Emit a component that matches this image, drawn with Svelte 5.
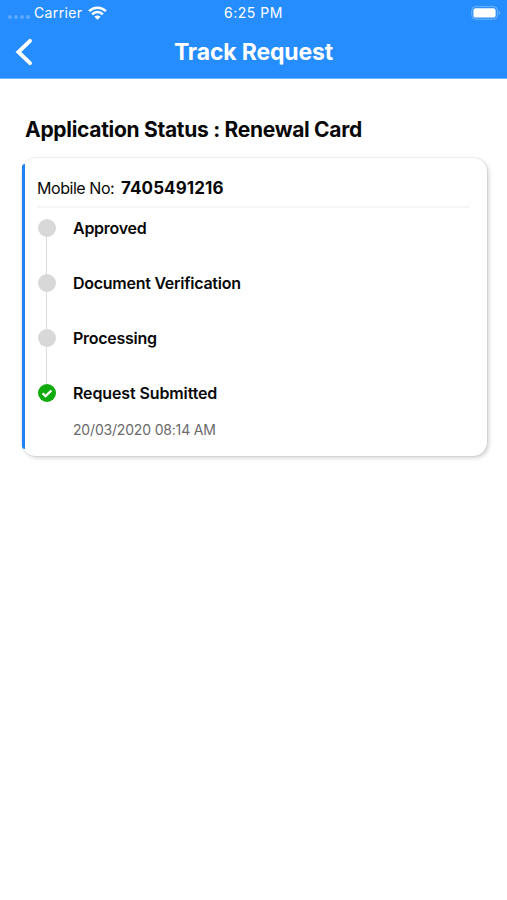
<script lang="ts">
    interface Step {
        label: string;
        done: boolean;
        date?: string;
    }

    const mobileNo = "7405491216";

    const steps: Step[] = [
        { label: "Approved", done: false },
        { label: "Document Verification", done: false },
        { label: "Processing", done: false },
        { label: "Request Submitted", done: true, date: "20/03/2020 08:14 AM" },
    ];
</script>

<div class="screen">
    <header class="header">
        <div class="status-bar">
            <div class="carrier">
                <span class="signal"><i></i><i></i><i></i><i></i></span>
                <span class="carrier-name">Carrier</span>
                <svg class="wifi" viewBox="0 0 19 14" width="19" height="14">
                    <path d="M1.1 5.1a12 12 0 0 1 16.8 0" />
                    <path d="M4.1 8.3a7.6 7.6 0 0 1 10.8 0" />
                    <path class="fill" d="M9.5 13.8L6.4 10.7a4.4 4.4 0 0 1 6.2 0z" />
                </svg>
            </div>
            <span class="clock">6:25 PM</span>
            <svg class="battery" viewBox="0 0 30 14" width="30" height="14">
                <rect class="shell" x="0.8" y="0.6" width="25.6" height="12.6" rx="3.8" />
                <rect x="2.4" y="2.2" width="22.2" height="9.4" rx="2.2" />
                <path class="tip" d="M27.8 4.8c1.6.6 1.6 3.6 0 4.2z" />
            </svg>
        </div>
        <div class="nav-bar">
            <button type="button" class="back" aria-label="Back">
                <svg viewBox="0 0 18 28" width="18" height="28">
                    <path d="M15 2.8L3.4 14L15 25.2" />
                </svg>
            </button>
            <h1>Track Request</h1>
        </div>
    </header>

    <main>
        <h2>Application Status : Renewal Card</h2>

        <section class="card">
            <div class="mobile">
                <span class="mobile-label">Mobile No:</span>
                <span class="mobile-value">{mobileNo}</span>
            </div>

            <ol class="steps">
                {#each steps as step}
                    <li class="step">
                        <div class="rail">
                            {#if step.done}
                                <svg class="check" viewBox="0 0 18 18" width="18" height="18">
                                    <circle cx="9" cy="9" r="9" />
                                    <path d="M4.6 9.2l2.9 2.9l5.9-5.6" />
                                </svg>
                            {:else}
                                <span class="dot"></span>
                                <span class="line"></span>
                            {/if}
                        </div>
                        <div class="step-body">
                            <span class="step-label" class:done={step.done}>{step.label}</span>
                            {#if step.date}
                                <span class="step-date">{step.date}</span>
                            {/if}
                        </div>
                    </li>
                {/each}
            </ol>
        </section>
    </main>
</div>

<style>
    :global(body) {
        background: #fff;
    }

    .screen {
        min-height: 900px;
        background: #fff;
        color: #080808;
        font-family: Inter, "Liberation Sans", sans-serif;
        white-space: nowrap;
    }

    .header {
        height: 79px;
        box-sizing: border-box;
        background: #268dff;
        border-bottom: 1px solid #70b7ff;
        color: #fff;
    }

    .status-bar {
        display: grid;
        grid-template-columns: 1fr auto 1fr;
        align-items: center;
        height: 26px;
        padding: 0 6px 0 8px;
    }

    .carrier {
        display: flex;
        align-items: center;
    }

    .signal {
        display: flex;
        gap: 2px;
        width: 26px;
        padding-top: 8px;
    }

    .signal i {
        width: 4px;
        height: 4px;
        border-radius: 50%;
        background: rgba(255, 255, 255, 0.25);
    }

    .carrier-name,
    .clock {
        font-size: 14px;
        line-height: 26px;
        letter-spacing: 0.35px;
    }

    .clock {
        letter-spacing: 0.5px;
        margin-right: 2px;
    }

    .wifi {
        margin-left: 6px;
        fill: none;
        stroke: #fff;
        stroke-width: 2.5;
    }

    .wifi .fill {
        fill: #fff;
        stroke: none;
    }

    .battery {
        justify-self: end;
        fill: #fff;
    }

    .battery .shell {
        fill: none;
        stroke: rgba(255, 255, 255, 0.35);
    }

    .battery .tip {
        fill: rgba(255, 255, 255, 0.4);
    }

    .nav-bar {
        display: grid;
        grid-template-columns: 60px 1fr 60px;
        align-items: center;
        height: 52px;
    }

    .back {
        display: flex;
        padding: 0 0 0 15px;
        border: none;
        background: none;
    }

    .back path {
        fill: none;
        stroke: #fff;
        stroke-width: 3.9;
        stroke-linecap: round;
    }

    h1 {
        margin: 0;
        text-align: center;
        font-size: 23px;
        line-height: 50px;
        font-weight: 650;
        letter-spacing: -0.15px;
    }

    main {
        padding: 36px 20px 0 22px;
    }

    h2 {
        margin: 0 0 13px 3px;
        font-size: 21px;
        line-height: 30px;
        font-weight: 650;
        letter-spacing: -0.3px;
    }

    .card {
        position: relative;
        box-sizing: border-box;
        width: 465px;
        height: 298px;
        padding: 14px 18px 0 15px;
        border-radius: 14px;
        background: #fff;
        box-shadow:
            0 0 1px 1px rgba(0, 0, 0, 0.06),
            2px 2px 4px rgba(0, 0, 0, 0.17);
    }

    .card::before {
        content: "";
        position: absolute;
        top: 6px;
        bottom: 7px;
        left: 0;
        width: 2.5px;
        border-radius: 3px 0 0 3px;
        background: #1f82f5;
    }

    .mobile {
        display: flex;
        height: 36px;
        box-sizing: border-box;
        border-bottom: 2px solid #f4f5f6;
        font-size: 16px;
        line-height: 32px;
    }

    .mobile-label {
        width: 84px;
        letter-spacing: -0.45px;
    }

    .mobile-value {
        font-size: 17px;
        font-weight: 650;
        letter-spacing: 0.1px;
    }

    .steps {
        margin: 0;
        padding: 11px 0 0;
        list-style: none;
    }

    .step {
        display: flex;
        height: 55px;
    }

    .rail {
        display: flex;
        flex-direction: column;
        align-items: center;
        width: 19px;
        margin-right: 17px;
    }

    .dot {
        width: 18px;
        height: 18px;
        flex: none;
        border-radius: 50%;
        background: #d8d8d8;
    }

    .line {
        flex: 1;
        width: 1.5px;
        background: #dedede;
    }

    .check circle {
        fill: #10ab0c;
    }

    .check path {
        fill: none;
        stroke: #fff;
        stroke-width: 2.3;
    }

    .step-body {
        display: flex;
        flex-direction: column;
        gap: 19px;
    }

    .step-label {
        font-size: 16px;
        line-height: 18px;
        font-weight: 600;
        letter-spacing: -0.26px;
    }

    .step-label.done {
        letter-spacing: -0.12px;
    }

    .step-date {
        color: #6a6a6a;
        font-size: 14px;
        line-height: 18px;
        letter-spacing: -0.18px;
    }
</style>
